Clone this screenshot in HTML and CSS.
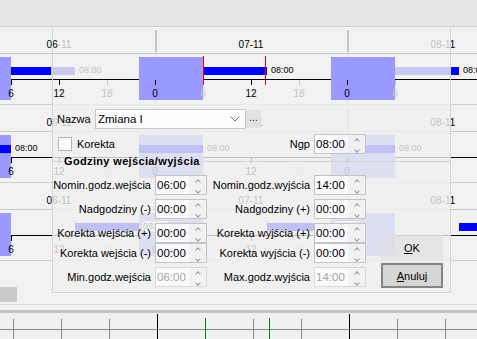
FILE: index.html
```html
<!DOCTYPE html>
<html>
<head>
    <meta charset="utf-8">
    <title>Zmiana</title>
    <link rel="stylesheet" href="styles.css">
</head>
<body>
    <div class="screen">
        <div class="topbar"></div>

        <!-- Harmonogram (drawn from data below) -->
        <div class="timeline" id="timeline"></div>

        <div class="scrollbar"><div class="thumb"></div></div>
        <div class="splitter"></div>
        <div class="ruler" id="ruler"><div class="ruler-line"></div></div>

        <!-- Okno zmiany -->
        <div class="dialog">
            <div class="name-row">
                <span class="name-lbl">Nazwa</span>
                <div class="combo">
                    <span class="combo-val">Zmiana I</span>
                    <svg class="combo-arrow" width="10" height="6" viewBox="0 0 10 6"><polyline points="0.5,0.5 5,5 9.5,0.5" fill="none" stroke="#7a7a7a" stroke-width="1"/></svg>
                </div>
                <span class="dots">...</span>
            </div>

            <div class="form-grid top-grid">
                <label class="check-wrap"><span class="check"></span>Korekta</label>
                <span class="lbl col3">Ngp</span>
                <div class="spin col4"><span class="val">08:00</span><span class="arrows"><i class="up"></i><i class="down"></i></span></div>
            </div>

            <div class="group">
                <div class="group-title"><span class="rule lead"></span><span class="title">Godziny wejścia/wyjścia</span><span class="rule"></span></div>
                <div class="form-grid rows">
                    <span class="lbl">Nomin.godz.wejścia</span>
                    <div class="spin"><span class="val">06:00</span><span class="arrows"><i class="up"></i><i class="down"></i></span></div>
                    <span class="lbl">Nomin.godz.wyjścia</span>
                    <div class="spin"><span class="val">14:00</span><span class="arrows"><i class="up"></i><i class="down"></i></span></div>

                    <span class="lbl">Nadgodziny (-)</span>
                    <div class="spin"><span class="val">00:00</span><span class="arrows"><i class="up"></i><i class="down"></i></span></div>
                    <span class="lbl">Nadgodziny (+)</span>
                    <div class="spin"><span class="val">00:00</span><span class="arrows"><i class="up"></i><i class="down"></i></span></div>

                    <span class="lbl">Korekta wejścia (+)</span>
                    <div class="spin"><span class="val">00:00</span><span class="arrows"><i class="up"></i><i class="down"></i></span></div>
                    <span class="lbl">Korekta wyjścia (+)</span>
                    <div class="spin"><span class="val">00:00</span><span class="arrows"><i class="up"></i><i class="down"></i></span></div>

                    <span class="lbl">Korekta wejścia (-)</span>
                    <div class="spin"><span class="val">00:00</span><span class="arrows"><i class="up"></i><i class="down"></i></span></div>
                    <span class="lbl">Korekta wyjścia (-)</span>
                    <div class="spin"><span class="val">00:00</span><span class="arrows"><i class="up"></i><i class="down"></i></span></div>

                    <span class="lbl">Min.godz.wejścia</span>
                    <div class="spin off"><span class="val">06:00</span><span class="arrows"><i class="up"></i><i class="down"></i></span></div>
                    <span class="lbl">Max.godz.wyjścia</span>
                    <div class="spin off"><span class="val">14:00</span><span class="arrows"><i class="up"></i><i class="down"></i></span></div>

                    <div class="buttons">
                        <button class="btn ok"><u>O</u>K</button>
                        <button class="btn cancel"><u>A</u>nuluj</button>
                    </div>
                </div>
            </div>
        </div>
    </div>

    <script>
        // 8px per hour, 06-11 00:00 sits just left of the screen
        const ORIGIN = -37;
        const HOUR = 8;
        const px = h => ORIGIN + h * HOUR;

        const rows = [
            {
                dates: ['06<span class="dim">-11</span>', '07-11', '<span class="dim">08-1</span>1'],
                bars: [[6, 11], [11, 14, 'faded'], [30, 38], [54, 61, 'faded'], [61, 62]],
                tags: [[14, 'faded'], [38], [62]],
                marks: [30, 37.75]
            },
            {
                dates: ['06-11', '07-11', '08-11'],
                bars: [[-2, 6], [22, 30], [46, 54]],
                tags: [[6], [30], [54]],
                marks: []
            },
            {
                dates: ['06-11', '07-11', '08-11'],
                bars: [[14, 22], [38, 46], [62, 70]],
                tags: [[22], [46], [70]],
                marks: []
            }
        ];

        let html = '';
        rows.forEach(row => {
            let head = '';
            let body = '<div class="axis"></div>';

            row.dates.forEach((d, i) => {
                head += `<span class="date" style="left:${px(12 + i * 24) - 20}px">${d}</span>`;
            });
            [24, 48].forEach(h => {
                head += `<span class="head-sep" style="left:${px(h)}px"></span>`;
                body += `<span class="day-line" style="left:${px(h)}px"></span>`;
            });

            // night hours 22:00 - 06:00
            [-2, 22, 46].forEach(h => {
                body += `<span class="night" style="left:${px(h)}px;width:${8 * HOUR}px"></span>`;
            });
            row.bars.forEach(([a, b, cls = '']) => {
                body += `<span class="bar ${cls}" style="left:${px(a)}px;width:${(b - a) * HOUR}px"></span>`;
            });
            row.tags.forEach(([h, cls = '']) => {
                body += `<span class="tag ${cls}" style="left:${px(h) + 3}px">08:00</span>`;
            });

            for (let k = 1; k <= 9; k++) {
                const hour = (k * 6) % 24;
                const dim = (hour === 18 || (hour === 6 && k > 1)) ? ' dim' : '';
                body += `<span class="tick${dim}" style="left:${px(k * 6)}px"></span>`;
                body += `<span class="hour${dim}" style="left:${px(k * 6) - 10}px">${hour}</span>`;
            }
            row.marks.forEach(h => {
                body += `<span class="mark" style="left:${Math.round(px(h))}px"></span>`;
            });

            html += `<div class="row"><div class="row-head">${head}</div><div class="row-body">${body}</div></div>`;
        });
        document.getElementById('timeline').innerHTML = html;

        // bottom ruler
        let ruler = '';
        for (let k = 0; k <= 9; k++) {
            let cls = 'rtick';
            if (k === 3 || k === 7) cls += ' day';
            if (k === 4) cls += ' now';
            ruler += `<span class="${cls}" style="left:${13 + k * 48}px"></span>`;
        }
        ruler += '<span class="rtick now" style="left:269px"></span>';
        document.getElementById('ruler').insertAdjacentHTML('beforeend', ruler);
    </script>
</body>
</html>
```

FILE: styles.css
```css
* {
    box-sizing: border-box;
}

body {
    margin: 0;
    background: #f0f0f0;
    font-family: "Liberation Sans", Arial, sans-serif;
    font-size: 11px;
    color: #000;
}

.screen {
    position: relative;
    width: 477px;
    height: 339px;
    overflow: hidden;
    background: #f2f2f2;
}

.topbar {
    height: 27px;
    background: #e6e6e6;
    border-bottom: 1px solid #d0d0d0;
}

/* timeline */
.row-head {
    position: relative;
    height: 27px;
    border-bottom: 1px solid #c8c8c8;
    font-size: 9px;
}

.row-body {
    position: relative;
    height: 51px;
    border-bottom: 1px solid #d0d0d0;
    font-size: 9px;
}

.date {
    position: absolute;
    top: 12px;
    width: 40px;
    text-align: center;
    line-height: 11px;
    font-size: 10px;
}

.date .dim {
    color: #c4c4c4;
}

.head-sep {
    position: absolute;
    top: 3px;
    bottom: 1px;
    width: 2px;
    background: #c6c6c6;
}

.day-line {
    position: absolute;
    top: 0;
    bottom: 0;
    width: 1px;
    background: #dcdcdc;
}

.axis {
    position: absolute;
    left: 0;
    right: 0;
    top: 25px;
    height: 1px;
    background: #000;
}

.night {
    position: absolute;
    top: 3px;
    height: 43px;
    background: #9999ff;
}

.bar {
    position: absolute;
    top: 13px;
    height: 8px;
    background: #0000ff;
}

.bar.faded {
    background: #c8c8f0;
}

.tag {
    position: absolute;
    top: 11px;
    padding: 0 1px;
    line-height: 11px;
    background: #f2f2f2;
}

.tag.faded {
    color: #c4c4c4;
}

.tick {
    position: absolute;
    top: 26px;
    width: 1px;
    height: 5px;
    background: #000;
}

.tick.dim {
    background: #c4c4c4;
}

.hour {
    position: absolute;
    top: 34px;
    width: 20px;
    text-align: center;
    line-height: 11px;
    font-size: 10px;
}

.hour.dim {
    color: #c4c4c4;
}

.mark {
    position: absolute;
    top: 2px;
    width: 1px;
    height: 29px;
    background: #ff0000;
}

/* bottom part */
.scrollbar {
    height: 44px;
    padding-top: 26px;
    border-bottom: 1px solid #dcdcdc;
}

.thumb {
    width: 17px;
    height: 15px;
    background: #cbcbcb;
}

.splitter {
    height: 8px;
    border-bottom: 3px solid #c4c4c4;
}

.ruler {
    position: relative;
    height: 27px;
    background: #f0f0f0;
}

.ruler-line {
    position: absolute;
    left: 0;
    right: 0;
    top: 16px;
    height: 1px;
    background: #8a8a8a;
}

.rtick {
    position: absolute;
    top: 6px;
    bottom: 0;
    width: 1px;
    background: #8a8a8a;
}

.rtick.day {
    top: 1px;
    background: #000;
}

.rtick.now {
    top: 5px;
    background: #008000;
}

/* dialog */
.dialog {
    position: absolute;
    left: 52px;
    top: 28px;
    width: 399px;
    height: 265px;
    border: 1px solid #d4d4d4;
    border-top: none;
    background: linear-gradient(to bottom, transparent 76px, rgba(240, 240, 240, 0.8) 76px);
    padding-top: 81px;
}

.name-row {
    display: flex;
    align-items: center;
    height: 20px;
    padding-left: 4px;
}

.name-lbl {
    width: 38px;
}

.combo {
    display: flex;
    align-items: center;
    width: 151px;
    height: 20px;
    border: 1px solid #c8c8c8;
    background: rgba(255, 255, 255, 0.85);
    padding: 0 5px 0 2px;
}

.combo-val {
    flex: 1;
    font-size: 11.5px;
}

.dots {
    width: 15px;
    height: 18px;
    line-height: 15px;
    text-align: center;
    background: rgba(224, 224, 224, 0.9);
    color: #333;
}

.form-grid {
    display: grid;
    grid-template-columns: 102px 52px 107px 52px 77px;
}

.top-grid {
    margin-top: 5px;
    height: 20px;
}

.check-wrap {
    grid-column: 1 / 3;
    display: flex;
    align-items: center;
    gap: 5px;
    padding-left: 5px;
}

.check {
    width: 14px;
    height: 14px;
    border: 1px solid #b4b4b4;
    background: rgba(255, 255, 255, 0.85);
}

.col3 {
    grid-column: 3;
    padding-right: 5px;
}

.col4 {
    grid-column: 4;
}

.lbl {
    height: 20px;
    line-height: 20px;
    text-align: right;
    padding-right: 4px;
    white-space: nowrap;
}

.spin {
    display: flex;
    width: 52px;
    height: 20px;
    border: 1px solid #c4c4c4;
    background: rgba(255, 255, 255, 0.8);
}

.spin .val {
    flex: 1;
    line-height: 18px;
    padding-left: 1px;
    font-size: 11.5px;
}

.spin .arrows {
    width: 17px;
    display: flex;
    flex-direction: column;
    align-items: center;
    justify-content: center;
    gap: 5px;
    background: rgba(238, 238, 238, 0.7);
}

.arrows i {
    width: 4px;
    height: 4px;
    border-left: 1px solid #9a9a9a;
    border-top: 1px solid #9a9a9a;
}

.arrows .up {
    transform: rotate(45deg);
    margin-top: 2px;
}

.arrows .down {
    transform: rotate(225deg);
}

.spin.off {
    border-color: #d8d8d8;
}

.spin.off .val {
    color: #a4a4a4;
}

.group-title {
    display: flex;
    align-items: center;
    height: 14px;
}

.rule {
    flex: 1;
    height: 1px;
    background: #d4d4d4;
}

.rule.lead {
    flex: none;
    width: 10px;
}

.title {
    font-weight: bold;
    letter-spacing: 0.35px;
    padding: 0 2px 0 1px;
}

.rows {
    margin-top: 7px;
    grid-template-rows: 24px 24px 20px 24px 20px;
    align-items: start;
}

/* four fields per line, the fifth column holds the buttons */
.rows > :nth-child(4n+1) { grid-column: 1; }
.rows > :nth-child(4n+2) { grid-column: 2; }
.rows > :nth-child(4n+3) { grid-column: 3; }
.rows > :nth-child(4n+4) { grid-column: 4; }

.rows > .buttons {
    grid-column: 5;
    grid-row: 3 / 6;
    align-self: end;
    display: flex;
    flex-direction: column;
    align-items: flex-end;
    gap: 3px;
    margin-bottom: -1px;
}

.btn {
    width: 62px;
    height: 25px;
    font-family: inherit;
    font-size: 11px;
    color: #000;
    padding: 0;
}

.btn.ok {
    border: none;
    background: rgba(222, 222, 222, 0.6);
}

.btn.cancel {
    border: 2px solid #848484;
    background: #d6d6d6;
}
```
